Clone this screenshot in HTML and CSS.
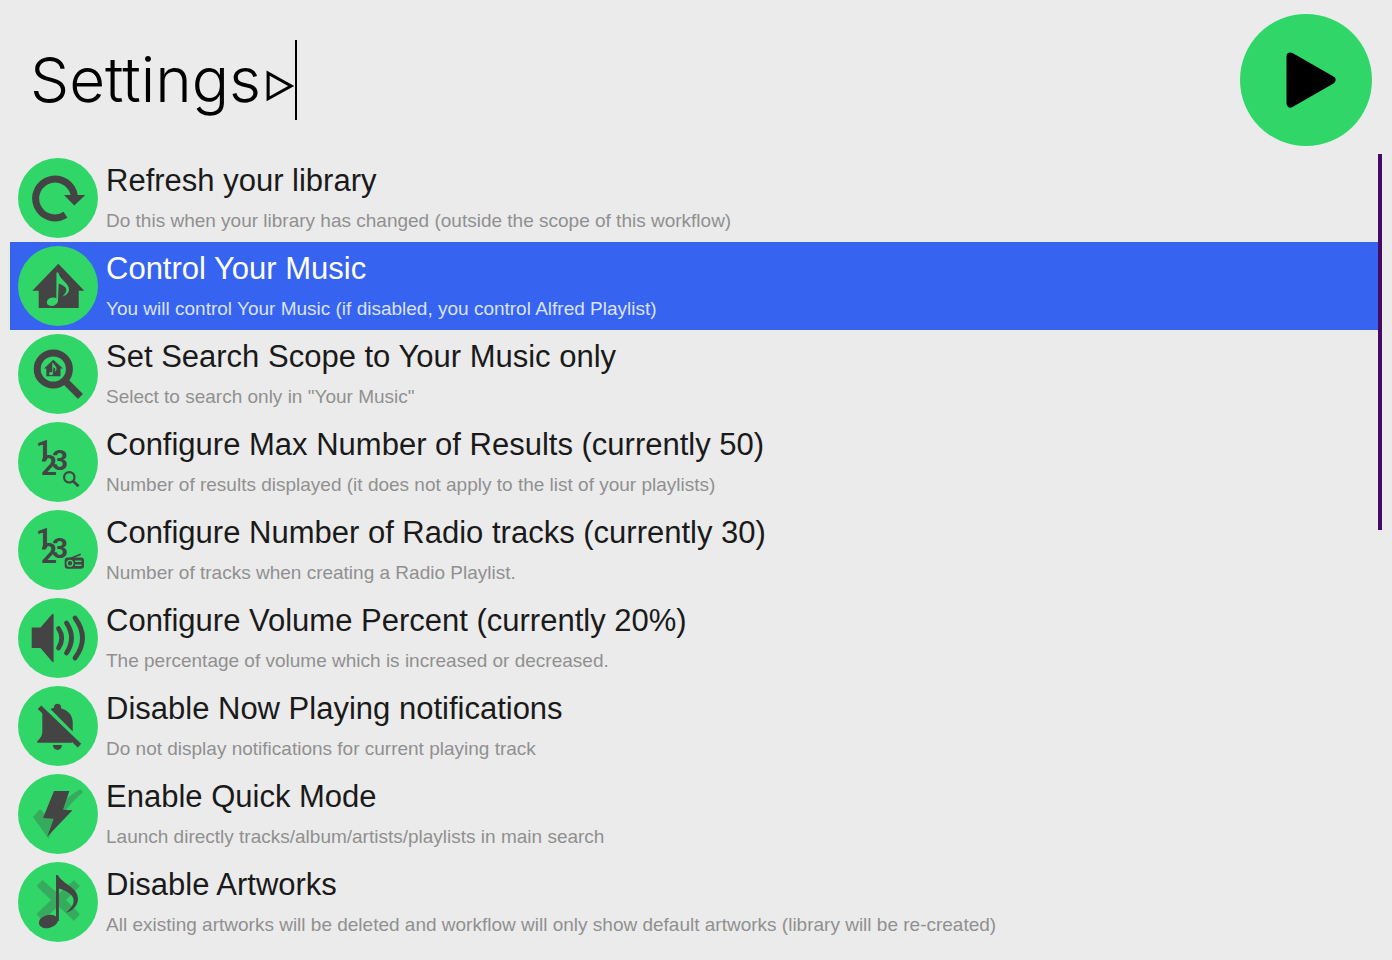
FILE: index.html
```html
<!DOCTYPE html>
<html lang="en">
<head>
<meta charset="utf-8">
<title>Settings</title>
<link rel="stylesheet" href="styles.css">
</head>
<body>
<main class="launcher">
  <header class="search">
    <label class="field">
      <input class="query" type="text" value="Settings&hairsp;▹" aria-label="Search" spellcheck="false">
      <span class="caret"></span>
    </label>
    <button class="play" type="button" aria-label="Play">
      <svg class="play-icon" viewBox="0 0 132 132" aria-hidden="true"><path d="M50.500 42.500 L91.500 66 L50.500 89.500 Z" stroke="#000" stroke-width="8" stroke-linejoin="round"/></svg>
    </button>
  </header>
  <div class="panel">
    <ul class="results">
      <li><button class="row" type="button">
        <svg class="icon" viewBox="0 0 80 80" aria-hidden="true"><circle class="disc" cx="40" cy="40" r="40"/><path class="line" stroke-width="7" d="M47.500 56.800 A19.400 19.400 0 1 1 56.300 38"/><path d="M46 37 H67.300 L56.300 47.600 Z"/></svg>
        <span class="text"><span class="title">Refresh your library</span><span class="sub">Do this when your library has changed (outside the scope of this workflow)</span></span>
      </button></li>
      <li><button class="row selected" type="button">
        <svg class="icon" viewBox="0 0 80 80" aria-hidden="true"><circle class="disc" cx="40" cy="40" r="40"/><path d="M40.300 17.700 L66.300 44.700 H60.700 V62 H20.700 V44.700 H14.300 Z"/><g class="disc"><ellipse cx="34.300" cy="55.700" rx="5.600" ry="4.200" transform="rotate(-15 34.300 55.700)"/><path d="M38.500 26.500 H40.300 C41.500 34 51 36.500 51 43.500 C51 46.500 48 49.500 44.500 50.500 C51 44 49 40.500 40.700 37.500 L39.900 56 H38.300 Z"/></g></svg>
        <span class="text"><span class="title">Control Your Music</span><span class="sub">You will control Your Music (if disabled, you control Alfred Playlist)</span></span>
      </button></li>
      <li><button class="row" type="button">
        <svg class="icon" viewBox="0 0 80 80" aria-hidden="true"><circle class="disc" cx="40" cy="40" r="40"/><circle class="line" cx="35.300" cy="35" r="16.100" stroke-width="7"/><path class="line" stroke-width="7" d="M46.500 46.500 L62.500 62.500"/><path d="M35.300 25.700 L45 34.500 H42.500 V42.300 H28.300 V34.500 H26 Z"/><g class="disc"><ellipse cx="33" cy="39.600" rx="2" ry="1.600"/><path d="M34.300 29 H35.200 C36 31.500 39 32.500 38.500 35.500 C38.200 37 37.400 37.500 36.500 37.800 C38 35.500 37.500 34 35.400 33.300 L35 39.600 H34.300 Z"/></g></svg>
        <span class="text"><span class="title">Set Search Scope to Your Music only</span><span class="sub">Select to search only in "Your Music"</span></span>
      </button></li>
      <li><button class="row" type="button">
        <svg class="icon" viewBox="0 0 80 80" aria-hidden="true"><circle class="disc" cx="40" cy="40" r="40"/><g class="digits"><text x="18" y="38">1</text><text x="23" y="53">2</text><text x="34" y="48">3</text></g><circle class="line" cx="51.300" cy="55.300" r="5.200" stroke-width="2.200"/><path class="line" stroke-width="2.800" d="M55 59 L60.600 64.300"/></svg>
        <span class="text"><span class="title">Configure Max Number of Results (currently 50)</span><span class="sub">Number of results displayed (it does not apply to the list of your playlists)</span></span>
      </button></li>
      <li><button class="row" type="button">
        <svg class="icon" viewBox="0 0 80 80" aria-hidden="true"><circle class="disc" cx="40" cy="40" r="40"/><g class="digits"><text x="18" y="38">1</text><text x="23" y="53">2</text><text x="34" y="48">3</text></g><rect x="46.700" y="47.500" width="19.300" height="11.300" rx="3"/><path class="line" stroke-width="1.500" d="M51 49 L62.700 44.200"/><circle cx="52" cy="53.300" r="2.900" fill="none" stroke="#30d768" stroke-width="1.400"/><path d="M57 51.200 H63.500 M57 55.300 H63.500" stroke="#30d768" stroke-width="1.500"/></svg>
        <span class="text"><span class="title">Configure Number of Radio tracks (currently 30)</span><span class="sub">Number of tracks when creating a Radio Playlist.</span></span>
      </button></li>
      <li><button class="row" type="button">
        <svg class="icon" viewBox="0 0 80 80" aria-hidden="true"><circle class="disc" cx="40" cy="40" r="40"/><path d="M13.700 29.500 H22.500 L34 16.300 Q35.600 15 35.600 17 V63 Q35.600 65 34 63.600 L22.500 50 H13.700 Z"/><path class="line" stroke-width="4.800" stroke-linecap="round" d="M40.500 30.500 Q47 40 40.500 50 M48.500 25 Q58.500 40 48.500 55 M57 20 Q72 40 57 60"/></svg>
        <span class="text"><span class="title">Configure Volume Percent (currently 20%)</span><span class="sub">The percentage of volume which is increased or decreased.</span></span>
      </button></li>
      <li><button class="row" type="button">
        <svg class="icon" viewBox="0 0 80 80" aria-hidden="true"><circle class="disc" cx="40" cy="40" r="40"/><path d="M32.500 23 L36 21.800 V20.500 A3.600 3.600 0 0 1 43 20.500 V22.300 C50 24.500 54.500 29 54.700 36 V45.500 Z M24.300 26 L54 54.500 V56.700 H19.300 V55 C22.500 52 24.300 50 24.300 45 Z M34.800 59 H44 C43.500 65.500 35.500 65.500 34.800 59 Z"/><path class="line" stroke-width="5" d="M21.500 21.300 L61.500 59.600"/></svg>
        <span class="text"><span class="title">Disable Now Playing notifications</span><span class="sub">Do not display notifications for current playing track</span></span>
      </button></li>
      <li><button class="row" type="button">
        <svg class="icon" viewBox="0 0 80 80" aria-hidden="true"><circle class="disc" cx="40" cy="40" r="40"/><path class="faint" d="M15 43 L22 35 L31 44 Q43 27 60.500 16 Q62.500 14.800 64 16.500 Q65.500 18.500 63 20 Q43 37 30.500 64.700 Z"/><path d="M36 17 H51.300 L45 35.700 L54.500 36.300 L29.300 62.500 L35.700 44.700 L25 44 Z"/></svg>
        <span class="text"><span class="title">Enable Quick Mode</span><span class="sub">Launch directly tracks/album/artists/playlists in main search</span></span>
      </button></li>
      <li><button class="row" type="button">
        <svg class="icon" viewBox="0 0 80 80" aria-hidden="true"><circle class="disc" cx="40" cy="40" r="40"/><path class="faint" d="M24.500 18 L40.300 32 L56 18 L62 24 L48 38 L62 52 L56 59 L40.300 44 L24.500 59 L18.500 52 L33 38 L18.500 24 Z"/><ellipse cx="30.300" cy="59.500" rx="9.700" ry="6.500" transform="rotate(-15 30.300 59.500)"/><path d="M38 13 H39.800 C44 22 60.500 25 60 37.500 C59.500 44 54 49.500 48 50.500 C59 42 59.500 32 40.900 26.500 V59 H38 Z"/></svg>
        <span class="text"><span class="title">Disable Artworks</span><span class="sub">All existing artworks will be deleted and workflow will only show default artworks (library will be re-created)</span></span>
      </button></li>
    </ul>
    <div class="scroll"><div class="thumb"></div></div>
  </div>
</main>
</body>
</html>
```
FILE: styles.css
```css
* { box-sizing: border-box; }
body {
  margin: 0;
  background: #ebebeb;
  font-family: "Liberation Sans", Arial, sans-serif;
  color: #1a1a1a;
}
.launcher { padding: 14px 10px; }
.search {
  display: flex;
  align-items: center;
  justify-content: space-between;
  padding: 0 10px 8px 20px;
}
.field { display: flex; align-items: center; }
.query {
  field-sizing: content;
  padding: 0;
  border: 0;
  outline: 0;
  background: transparent;
  color: #000;
  font: 300 62px/80px Inter, "DejaVu Sans Condensed", "DejaVu Sans", sans-serif;
}
.caret { width: 2px; height: 80px; background: #000; }
.play {
  width: 132px;
  height: 132px;
  padding: 0;
  border: 0;
  border-radius: 50%;
  background: #30d768;
}
.play-icon { display: block; width: 100%; }
.panel { display: flex; }
.results { flex: 1; min-width: 0; margin: 0; padding: 0; list-style: none; }
.row {
  display: flex;
  gap: 8px;
  width: 100%;
  padding: 4px 8px;
  border: 0;
  background: transparent;
  font: inherit;
  color: inherit;
  text-align: left;
}
.selected { background: #3663f0; color: #fff; }
.icon { flex: none; width: 80px; height: 80px; fill: #444; }
.disc { fill: #30d768; }
.line { fill: none; stroke: #444; }
.faint { opacity: 0.3; }
.digits { font: 700 28px Roboto, sans-serif; }
.text { display: flex; flex-direction: column; min-width: 0; }
.title { font-size: 31px; line-height: 46px; }
.sub { font-size: 19px; line-height: 34px; color: #909090; }
.selected .sub { color: #dbe3fc; }
.scroll { width: 4px; }
.thumb { height: 47.500%; background: #440a66; }
```
